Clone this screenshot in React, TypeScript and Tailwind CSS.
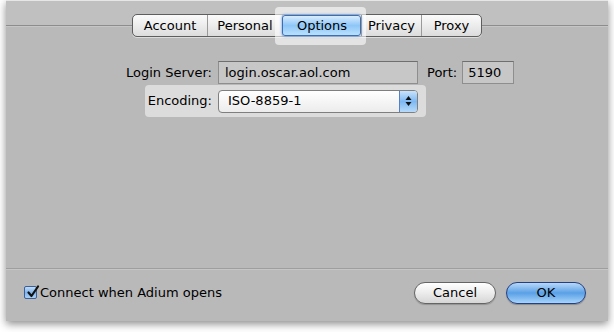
import React from 'react';

const tabs = ['Account', 'Personal', 'Options', 'Privacy', 'Proxy'];
const tabWidths: Record<string, string> = {
  Account: 'w-[74px]',
  Personal: 'w-[75px]',
  Options: 'w-[79px]',
  Privacy: 'w-[60px]',
  Proxy: 'w-[60px]',
};

const TabBar: React.FC = () => (
  <div className="flex justify-center -mt-[13px]">
    <div className="flex h-[23px] rounded-[5px] border border-[#5e5e5e] bg-gradient-to-b from-[#fbfbfb] via-[#ececec] to-[#dcdcdc] shadow-[0_1px_0_rgba(255,255,255,0.5)]">
      {tabs.map((t, i) => {
        const selected = t === 'Options';
        return (
          <div
            key={t}
            className={`relative flex items-center justify-center ${tabWidths[t]} ${i > 0 ? 'border-l border-[#9a9a9a]' : ''} ${i === 0 ? 'rounded-l-[4px]' : ''} ${i === tabs.length - 1 ? 'rounded-r-[4px]' : ''}`}
          >
            {selected && (
              <>
                <div className="absolute -left-[8px] -right-[5px] -top-[8px] -bottom-[9px] rounded-[4px] bg-white/60" />
                <div className="absolute inset-0 -left-[1px] border border-[#3d6eb4] rounded-[3px] bg-gradient-to-b from-[#d9edfd] via-[#8ec6f8] to-[#b9e0fd] shadow-[0_0_3px_rgba(60,130,220,0.9)]" />
              </>
            )}
            <span className="relative text-[13px] text-black leading-none">{t}</span>
          </div>
        );
      })}
    </div>
  </div>
);

const ArrowsIcon: React.FC = () => (
  <svg width="7" height="12" viewBox="0 0 7 12">
    <path d="M3.5 1 L6.5 5 L0.5 5 Z" fill="#111" />
    <path d="M3.5 11 L6.5 7 L0.5 7 Z" fill="#111" />
  </svg>
);

const CheckIcon: React.FC = () => (
  <svg width="14" height="14" viewBox="0 0 14 14" className="absolute -top-[2px] left-[1px]">
    <path d="M2.5 7.5 L5.5 11 L12 1.5" stroke="#111" strokeWidth="2.2" fill="none" strokeLinecap="round" strokeLinejoin="round" />
  </svg>
);

export default function App() {
  return (
    <div className="w-[614px] h-[332px] bg-white overflow-hidden" style={{ fontFamily: '"DejaVu Sans", "Noto Sans", sans-serif' }}>
      <div className="ml-[6px] w-[602px] h-[321px] flex flex-col bg-[#b9b9b9] border-t border-[#e6e6e6] shadow-[0_3px_8px_rgba(0,0,0,0.45)]">
        <div className="h-[25px] bg-[#c0c0c0] border-b border-[#8d8d8d] shrink-0" />
        <div className="h-px bg-[#c6c6c6] shrink-0" />
        <TabBar />

        <div className="flex-1 flex flex-col pt-[24px] text-[13px] text-black">
          <div className="flex items-center h-[23px]">
            <span className="w-[212px] text-right pr-[6px]">Login Server:</span>
            <div className="w-[200px] h-[23px] flex items-center px-[6px] bg-[#c7c7c7] border border-[#8e8e8e] border-t-[#6f6f6f]">
              login.oscar.aol.com
            </div>
            <span className="ml-[9px]">Port:</span>
            <div className="ml-[5px] w-[52px] h-[23px] flex items-center px-[5px] bg-[#c7c7c7] border border-[#8e8e8e] border-t-[#6f6f6f]">
              5190
            </div>
          </div>

          <div className="ml-[139px] mt-[1px] w-[281px] h-[32px] rounded-[4px] bg-[#dcdcdc] flex items-center">
            <span className="w-[73px] text-right pr-[6px]">Encoding:</span>
            <div className="w-[200px] h-[23px] flex items-stretch rounded-[4px] border border-[#7f7f7f] bg-gradient-to-b from-white to-[#ececec] overflow-hidden">
              <span className="flex-1 flex items-center pl-[9px]">ISO-8859-1</span>
              <div className="w-[18px] flex items-center justify-center border-l border-[#5a7fbf] bg-gradient-to-b from-[#c9e3fb] via-[#7db8f2] to-[#b7dbfb]">
                <ArrowsIcon />
              </div>
            </div>
          </div>
        </div>

        <div className="h-px bg-[#9e9e9e] shrink-0" />
        <div className="h-px bg-[#c6c6c6] shrink-0" />
        <div className="h-[51px] shrink-0 flex items-center pl-[18px] pr-[22px] pb-[6px] text-[13px] text-black">
          <div className="flex items-center">
            <div className="relative w-[13px] h-[13px] rounded-[2px] border border-[#3b5f96] bg-gradient-to-b from-[#c3dcf6] via-[#7fb3ea] to-[#a9d1f7]">
              <CheckIcon />
            </div>
            <span className="ml-[3px]">Connect when Adium opens</span>
          </div>
          <div className="flex-1" />
          <div className="w-[82px] h-[22px] rounded-full border border-[#656565] bg-gradient-to-b from-white via-[#ececec] to-[#d6d6d6] flex items-center justify-center shadow-[0_1px_1px_rgba(0,0,0,0.2)]">
            Cancel
          </div>
          <div className="ml-[10px] w-[80px] h-[22px] rounded-full border border-[#253f80] bg-gradient-to-b from-[#b7d8f8] via-[#5aa0e6] to-[#a6d4fb] flex items-center justify-center shadow-[0_1px_1px_rgba(0,0,0,0.25)]">
            OK
          </div>
        </div>
      </div>
    </div>
  );
}
